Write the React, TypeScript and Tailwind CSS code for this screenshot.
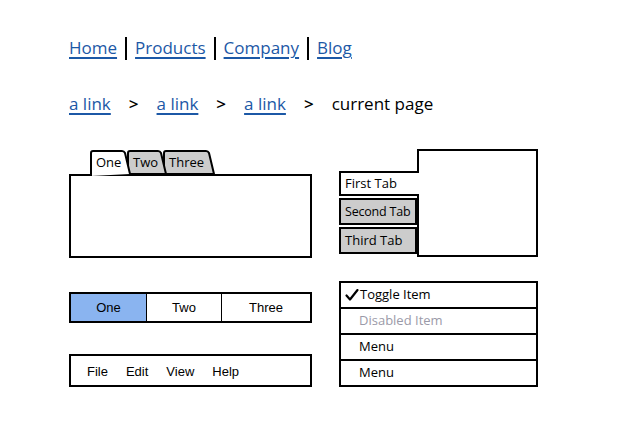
import React from "react";

const BS = { fontFamily: '"Open Sans", "DejaVu Sans", sans-serif' };
const AR = { fontFamily: '"Liberation Sans", Arial, sans-serif' };

function NavLink({ children }: { children: React.ReactNode }) {
  return (
    <span className="text-[#1c58a6] underline underline-offset-[3px] decoration-[1.5px]">{children}</span>
  );
}

function Bar() {
  return <span className="inline-block w-[2px] h-[23px] bg-black mx-[8px]" />;
}

function Tab({ label, w, active, z }: { label: string; w: number; active?: boolean; z: string }) {
  const path = `M1,${active ? 26 : 24} L1,3 Q1,1 3,1 L${w - 9},1 Q${w - 7},1 ${w - 6},3 L${w - 1},24`;
  return (
    <div
      className={`relative h-[24px] ${z} ${active ? "-mb-[2px] h-[26px]" : ""}`}
      style={{ width: w }}
    >
      <svg className="absolute inset-0" width={w} height={active ? 26 : 24}>
        <path
          d={path + (active ? "" : " Z")}
          fill={active ? "#ffffff" : "#cccccc"}
          stroke="#000"
          strokeWidth={2}
          strokeLinejoin="round"
        />
      </svg>
      <span className="relative block pl-[6px] pt-[3px] text-[13px] leading-[18px] text-black whitespace-nowrap" style={BS}>
        {label}
      </span>
    </div>
  );
}

export default function App() {
  return (
    <div className="w-[636px] h-[430px] bg-white pl-[69px] pt-[36px] text-black overflow-hidden">
      {/* top nav */}
      <div className="flex items-center h-[24px] text-[17px]" style={BS}>
        <NavLink>Home</NavLink>
        <Bar />
        <NavLink>Products</NavLink>
        <Bar />
        <NavLink>Company</NavLink>
        <Bar />
        <NavLink>Blog</NavLink>
      </div>

      {/* breadcrumb */}
      <div className="flex items-center h-[24px] mt-[32px] text-[17px]" style={BS}>
        <NavLink>a link</NavLink>
        <span className="mx-[18px] font-semibold">&gt;</span>
        <NavLink>a link</NavLink>
        <span className="mx-[18px] font-semibold">&gt;</span>
        <NavLink>a link</NavLink>
        <span className="mx-[18px] font-semibold">&gt;</span>
        <span className="font-medium">current page</span>
      </div>

      {/* row 1 */}
      <div className="flex items-start mt-[33px] gap-[27px]">
        {/* horizontal tabs */}
        <div className="w-[243px] mt-[1px]">
          <div className="flex pl-[21px] items-end">
            <Tab label="One" w={41} active z="z-30" />
            <div className="-ml-[4px]">
              <Tab label="Two" w={40} z="z-20" />
            </div>
            <div className="-ml-[4px]">
              <Tab label="Three" w={52} z="z-10" />
            </div>
          </div>
          <div className="h-[84px] border-2 border-black bg-white" />
        </div>

        {/* vertical tabs */}
        <div className="flex w-[199px]">
          <div className="w-[78px] pt-[22px] flex flex-col gap-[2px]">
            <div
              className="relative z-10 w-[80px] h-[25px] bg-white border-2 border-r-0 border-black pl-[4px] text-[13px] leading-[21px] whitespace-nowrap"
              style={BS}
            >
              First Tab
            </div>
            <div
              className="w-[78px] h-[27px] bg-[#cccccc] border-2 border-black pl-[4px] text-[12.5px] tracking-[-0.2px] leading-[23px] whitespace-nowrap overflow-hidden"
              style={BS}
            >
              Second Tab
            </div>
            <div
              className="w-[78px] h-[27px] bg-[#cccccc] border-2 border-black pl-[4px] text-[13px] leading-[23px] whitespace-nowrap"
              style={BS}
            >
              Third Tab
            </div>
          </div>
          <div className="w-[123px] h-[108px] border-2 border-black bg-white" />
        </div>
      </div>

      {/* row 2 */}
      <div className="flex items-start mt-[23px] gap-[27px]">
        <div className="w-[243px] pt-[11px]">
          {/* button bar */}
          <div className="flex h-[31px] border-2 border-black text-[13px]" style={AR}>
            <div className="w-[75px] bg-[#8ab4f0] flex items-center justify-center">One</div>
            <div className="w-[75px] border-l border-black flex items-center justify-center">Two</div>
            <div className="flex-1 border-l border-black flex items-center justify-center">Three</div>
          </div>
          {/* menu bar */}
          <div
            className="mt-[31px] h-[33px] border-2 border-black flex items-center pl-[16px] pt-[3px] gap-[18px] text-[13px]"
            style={AR}
          >
            <span>File</span>
            <span>Edit</span>
            <span>View</span>
            <span>Help</span>
          </div>
        </div>

        {/* menu */}
        <div className="w-[199px] h-[106px] border-2 border-black flex flex-col text-[13px]" style={BS}>
          <div className="h-[26px] flex items-center pl-[4px] border-b-2 border-black">
            <svg width="14" height="12" viewBox="0 0 14 12" className="mr-[1px]">
              <path d="M1.5 6.5 L5 10.5 L12.5 1" fill="none" stroke="#000" strokeWidth="2.2" strokeLinecap="round" strokeLinejoin="round" />
            </svg>
            <span>Toggle Item</span>
          </div>
          <div className="h-[26px] flex items-center pl-[18px] border-b-2 border-black text-[#9b9aa8]">
            Disabled Item
          </div>
          <div className="h-[26px] flex items-center pl-[18px] border-b-2 border-black">Menu</div>
          <div className="flex-1 flex items-center pl-[18px]">Menu</div>
        </div>
      </div>
    </div>
  );
}
